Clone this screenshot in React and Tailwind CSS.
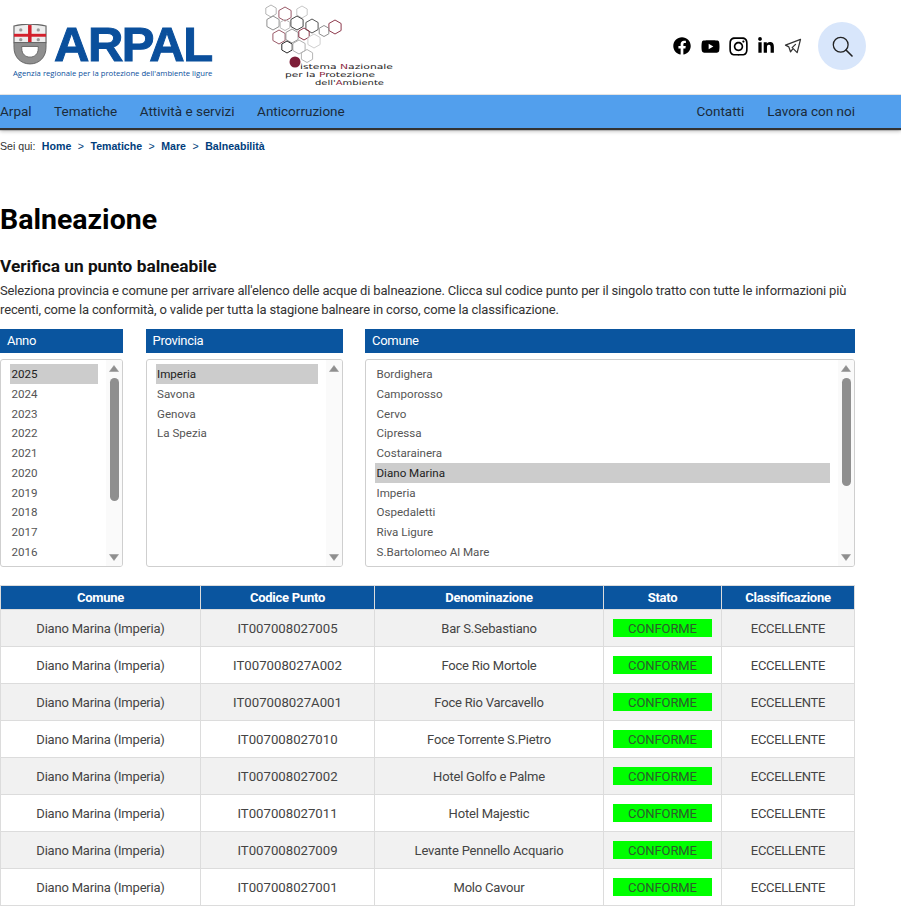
import React from "react";
import { FaFacebook, FaYoutube, FaInstagram, FaLinkedinIn } from "react-icons/fa";
import { TbBrandTelegram } from "react-icons/tb";

const anni = ["2025","2024","2023","2022","2021","2020","2019","2018","2017","2016"];
const province = ["Imperia","Savona","Genova","La Spezia"];
const comuni = ["Bordighera","Camporosso","Cervo","Cipressa","Costarainera","Diano Marina","Imperia","Ospedaletti","Riva Ligure","S.Bartolomeo Al Mare"];
const righe = [
  ["IT007008027005","Bar S.Sebastiano"],
  ["IT007008027A002","Foce Rio Mortole"],
  ["IT007008027A001","Foce Rio Varcavello"],
  ["IT007008027010","Foce Torrente S.Pietro"],
  ["IT007008027002","Hotel Golfo e Palme"],
  ["IT007008027011","Hotel Majestic"],
  ["IT007008027009","Levante Pennello Acquario"],
  ["IT007008027001","Molo Cavour"],
];
const hex = [
  [16,11,6,"#b5b5b5"],[30,14,7,"#9a5a68"],[47,12,6,"#c8c8c8"],[18,23,7,"#8f8f8f"],[30,25,5.5,"#bbb"],[42,23,7,"#444"],
  [57,26,7,"#555"],[80,27,7,"#8e3a4d"],[69,31,5.5,"#8f8f8f"],[24,37,7,"#9a5a68"],[37,36,7,"#999"],[49,34,6,"#8e3a4d"],
  [59,41,7,"#cfcfcf"],[32,47,6,"#2a2a2a"],[44,47,7,"#b0b0b0"],[52,56,6.5,"#b5b5b5"],
];
const hexPts = (cx, cy, r) =>
  Array.from({ length: 6 }, (_, i) => {
    const a = (Math.PI / 3) * i + Math.PI / 6;
    return `${(cx + r * Math.cos(a)).toFixed(1)},${(cy + r * Math.sin(a)).toFixed(1)}`;
  }).join(" ");

function Scrollbar({ thumb }) {
  return (
    <div className="w-[16px] shrink-0 flex flex-col items-center bg-[#fafafa] pt-[5px] pb-[5px]">
      <svg width="10" height="7" viewBox="0 0 10 7"><path d="M5 0.5 L9.5 6.5 H0.5 Z" fill="#8f8f8f" stroke="#8f8f8f" strokeWidth="0.5" strokeLinejoin="round" /></svg>
      <div className="flex-1 w-full flex justify-center pt-[6px] pb-[3px]">
        {thumb ? <div className="w-[9px] rounded-[5px] bg-[#8f8f8f]" style={{ height: thumb }} /> : null}
      </div>
      <svg width="10" height="7" viewBox="0 0 10 7"><path d="M5 6.5 L9.5 0.5 H0.5 Z" fill="#8f8f8f" stroke="#8f8f8f" strokeWidth="0.5" strokeLinejoin="round" /></svg>
    </div>
  );
}

function ListBox({ title, items, selected, thumb, width }) {
  return (
    <div className={`${width} shrink-0`}>
      <div className="h-[24px] bg-[#0a559f] text-white text-[13px] tracking-[-0.3px] leading-[24px] pl-[7px]">{title}</div>
      <div className="mt-[6px] h-[208px] border border-[#cfcfcf] rounded-[3px] flex overflow-hidden bg-white">
        <div className="flex-1 pt-[4px] pl-[9px] pr-[8px]">
          {items.map((it) => (
            <div
              key={it}
              className={`h-[19.75px] leading-[20px] pl-[1.5px] text-[11.6px] ${it === selected ? "bg-[#cccccc] text-[#222]" : "text-[#555]"}`}
            >
              {it}
            </div>
          ))}
        </div>
        <Scrollbar thumb={thumb} />
      </div>
    </div>
  );
}

export default function App() {
  return (
    <div className="w-[901px] min-h-[911px] bg-white text-[#333] overflow-hidden" style={{ fontFamily: "Roboto, sans-serif" }}>
      <header className="h-[95px] flex items-start border-b border-[#e6e6e6]">
        <div className="w-[255px] shrink-0 pl-[13px] pt-[24px]" style={{ fontFamily: "'Liberation Sans', sans-serif" }}>
          <div className="flex items-center h-[41px]">
            <svg width="34" height="41" viewBox="0 0 35 42" className="shrink-0">
              <path d="M1 2 Q17 -2 34 2 V19 H1 Z" fill="#ededed" stroke="#666" strokeWidth="1.2" />
              <rect x="15.5" y="1" width="3.6" height="23" fill="#d3202c" />
              <rect x="1" y="10" width="33" height="3" fill="#d3202c" />
              <path d="M1 19 V24 C1 34 8 41 17.5 41 C27 41 34 34 34 24 V19 Z" fill="#8f8f8f" stroke="#666" />
              <path d="M9 23 V25 C9 31 13 34 17.5 34 C22 34 26 31 26 25 V23 Z" fill="#fff" stroke="#666" />
              <circle cx="8" cy="6" r="1.7" fill="#999" /><circle cx="26" cy="6" r="1.7" fill="#999" />
              <circle cx="8" cy="16" r="1.7" fill="#999" /><circle cx="26" cy="16" r="1.7" fill="#999" />
            </svg>
            <span className="ml-[7px] font-bold text-[#0a4f9c] text-[49px] leading-[41px] tracking-[-1.5px] [-webkit-text-stroke:1px_#0a4f9c]">ARPAL</span>
          </div>
          <div className="text-[#0a4f9c] text-[7.7px] leading-[12px] mt-[2px] whitespace-nowrap" style={{ fontFamily: "'Open Sans', sans-serif" }}>
            Agenzia regionale per la protezione dell'ambiente ligure
          </div>
        </div>
        <svg width="150" height="92" viewBox="0 0 150 92" className="shrink-0">
          {hex.map(([x, y, r, c], i) => (
            <polygon key={i} points={hexPts(x, y, r)} fill="none" stroke={c} strokeWidth="1" />
          ))}
          <circle cx="40" cy="62" r="5.5" fill="#7d1d38" />
          <g fontFamily="'DejaVu Sans', sans-serif" fontSize="6.8" fill="#222">
            <text x="45" y="68.5" textLength="93" lengthAdjust="spacingAndGlyphs">istema <tspan fill="#8e2a45">N</tspan>azionale</text>
            <text x="30" y="76.5" textLength="90" lengthAdjust="spacingAndGlyphs">per la <tspan fill="#8e2a45">P</tspan>rotezione</text>
            <text x="60" y="84.5" textLength="69" lengthAdjust="spacingAndGlyphs">dell'<tspan fill="#8e2a45">A</tspan>mbiente</text>
          </g>
        </svg>
        <div className="flex-1 flex items-center justify-end pt-[22px] pr-[35px]">
          <div className="flex items-center text-black">
            <span className="w-[28px] flex justify-center"><FaFacebook size={18} /></span>
            <span className="w-[28px] flex justify-center"><FaYoutube size={19} /></span>
            <span className="w-[28px] flex justify-center"><FaInstagram size={21} /></span>
            <span className="w-[27px] flex justify-center"><FaLinkedinIn size={18} /></span>
            <span className="w-[28px] flex justify-center text-[#333]"><TbBrandTelegram size={20} strokeWidth={1.5} /></span>
          </div>
          <div className="ml-[11px] w-[48px] h-[48px] rounded-full bg-[#d8e6fb] flex items-center justify-center text-[#222]">
            <svg width="21" height="21" viewBox="0 0 21 21" fill="none" stroke="#222">
              <circle cx="8.7" cy="8.7" r="7.4" strokeWidth="1.3" />
              <path d="M14 14 L20 20" strokeWidth="1.6" strokeLinecap="round" />
            </svg>
          </div>
        </div>
      </header>

      <nav className="h-[33px] bg-[#529fed] shadow-[0_2px_1px_#333,0_3px_4px_rgba(0,0,0,0.3)] text-[#1b2b3a] text-[13.5px]">
        <div className="w-[855px] h-full flex items-center justify-between">
          <div className="flex gap-[22.5px]">
            <span>Arpal</span><span>Tematiche</span><span>Attività e servizi</span><span>Anticorruzione</span>
          </div>
          <div className="flex gap-[23px]">
            <span>Contatti</span><span>Lavora con noi</span>
          </div>
        </div>
      </nav>

      <div className="mt-[13px] h-[12px] flex items-center text-[10.6px] whitespace-nowrap" style={{ fontFamily: "'Liberation Sans', sans-serif" }}>
        <span className="text-[#333] mr-[6.5px]">Sei qui:</span>
        <span className="font-bold text-[#003d7c]">Home</span>
        <span className="mx-[6.5px] text-[#003d7c]">&gt;</span>
        <span className="font-bold text-[#003d7c]">Tematiche</span>
        <span className="mx-[6.5px] text-[#003d7c]">&gt;</span>
        <span className="font-bold text-[#003d7c]">Mare</span>
        <span className="mx-[6.5px] text-[#003d7c]">&gt;</span>
        <span className="font-bold text-[#003d7c]">Balneabilità</span>
      </div>

      <main className="w-[855px]">
        <h1 className="mt-[49px] text-[28.5px] leading-[36px] font-bold text-black">Balneazione</h1>
        <h2 className="mt-[17px] text-[17.3px] leading-[22px] font-bold text-[#111] whitespace-nowrap">Verifica un punto balneabile</h2>
        <p className="mt-[4px] text-[13px] tracking-[-0.15px] leading-[19px] text-[#333]">
          Seleziona provincia e comune per arrivare all'elenco delle acque di balneazione. Clicca sul codice punto per il singolo tratto con tutte le informazioni più recenti, come la conformità, o valide per tutta la stagione balneare in corso, come la classificazione.
        </p>

        <div className="mt-[10px] flex justify-between">
          <ListBox title="Anno" items={anni} selected="2025" thumb={123} width="w-[123px]" />
          <ListBox title="Provincia" items={province} selected="Imperia" width="w-[197px]" />
          <ListBox title="Comune" items={comuni} selected="Diano Marina" thumb={108} width="w-[490px]" />
        </div>

        <table className="mt-[18px] w-[854px] table-fixed border-collapse text-[13px] tracking-[-0.2px] text-[#444]">
          <colgroup>
            <col className="w-[200px]" /><col className="w-[174px]" /><col className="w-[229px]" /><col className="w-[118px]" /><col className="w-[133px]" />
          </colgroup>
          <thead>
            <tr className="h-[24px] bg-[#0a559f] text-white">
              {["Comune","Codice Punto","Denominazione","Stato","Classificazione"].map((h) => (
                <th key={h} className="border border-[#dcdcdc] font-bold text-[13px] p-0 pt-[1px] tracking-[-0.25px]">{h}</th>
              ))}
            </tr>
          </thead>
          <tbody>
            {righe.map(([cod, den], i) => (
              <tr key={cod} className={`h-[37px] text-center ${i % 2 === 0 ? "bg-[#f1f1f1]" : "bg-white"}`}>
                <td className="border border-[#dcdcdc] p-0 pt-[1px]">Diano Marina (Imperia)</td>
                <td className="border border-[#dcdcdc] p-0 pt-[1px] text-[13.2px] tracking-normal">{cod}</td>
                <td className="border border-[#dcdcdc] p-0 pt-[1px]">{den}</td>
                <td className="border border-[#dcdcdc] p-0">
                  <div className="mx-[9px] h-[18px] leading-[19px] bg-[#00ff00] text-[#2c5c2c] tracking-[-0.1px]">CONFORME</div>
                </td>
                <td className="border border-[#dcdcdc] p-0 pt-[1px] tracking-[-0.3px]">ECCELLENTE</td>
              </tr>
            ))}
          </tbody>
        </table>
      </main>
    </div>
  );
}
